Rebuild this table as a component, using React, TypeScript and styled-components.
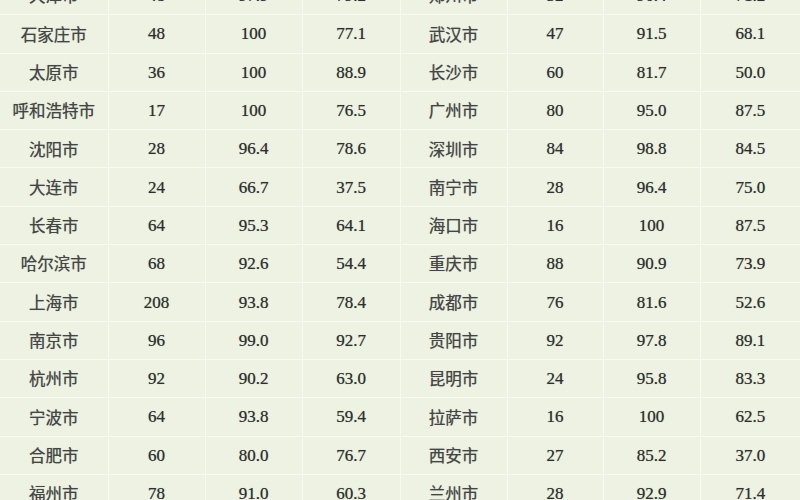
import React from 'react';
import styled, { createGlobalStyle } from 'styled-components';

const GlobalStyle = createGlobalStyle`
  html, body {
    margin: 0;
    padding: 0;
    background: #edf2e3;
  }
`;

type Row = [string, string, string, string];

const leftRows: Row[] = [
  ['天津市', '48', '97.9', '79.2'],
  ['石家庄市', '48', '100', '77.1'],
  ['太原市', '36', '100', '88.9'],
  ['呼和浩特市', '17', '100', '76.5'],
  ['沈阳市', '28', '96.4', '78.6'],
  ['大连市', '24', '66.7', '37.5'],
  ['长春市', '64', '95.3', '64.1'],
  ['哈尔滨市', '68', '92.6', '54.4'],
  ['上海市', '208', '93.8', '78.4'],
  ['南京市', '96', '99.0', '92.7'],
  ['杭州市', '92', '90.2', '63.0'],
  ['宁波市', '64', '93.8', '59.4'],
  ['合肥市', '60', '80.0', '76.7'],
  ['福州市', '78', '91.0', '60.3'],
];

const rightRows: Row[] = [
  ['郑州市', '52', '90.4', '71.2'],
  ['武汉市', '47', '91.5', '68.1'],
  ['长沙市', '60', '81.7', '50.0'],
  ['广州市', '80', '95.0', '87.5'],
  ['深圳市', '84', '98.8', '84.5'],
  ['南宁市', '28', '96.4', '75.0'],
  ['海口市', '16', '100', '87.5'],
  ['重庆市', '88', '90.9', '73.9'],
  ['成都市', '76', '81.6', '52.6'],
  ['贵阳市', '92', '97.8', '89.1'],
  ['昆明市', '24', '95.8', '83.3'],
  ['拉萨市', '16', '100', '62.5'],
  ['西安市', '27', '85.2', '37.0'],
  ['兰州市', '28', '92.9', '71.4'],
];

const widths = [108, 97, 97, 98, 107, 96, 97, 100];

const Page = styled.div`
  width: 800px;
  height: 500px;
  overflow: hidden;
  background: #edf2e3;
`;

const Table = styled.table`
  width: 800px;
  margin-top: -24px;
  border-collapse: collapse;
  table-layout: fixed;
`;

const Cell = styled.td<{ $city?: boolean }>`
  height: 37.3px;
  padding: 0;
  border: 1.5px solid #f8faf2;
  text-align: center;
  vertical-align: middle;
  font-family: ${(p) =>
    p.$city
      ? '"Noto Sans CJK SC", sans-serif'
      : '"Liberation Serif", "Times New Roman", serif'};
  font-size: ${(p) => (p.$city ? '16.5px' : '17px')};
  color: ${(p) => (p.$city ? '#454545' : '#2f2f2f')};
  line-height: 1;
  white-space: nowrap;
  text-shadow: 0 0 0.7px rgba(50, 50, 50, 0.6);
  &:first-child {
    border-left: none;
  }
  &:last-child {
    border-right: none;
  }
`;

export default function App() {
  return (
    <Page>
      <GlobalStyle />
      <Table>
        <colgroup>
          {widths.map((w, i) => (
            <col key={i} style={{ width: w }} />
          ))}
        </colgroup>
        <tbody>
          {leftRows.map((l, i) => {
            const r = rightRows[i];
            return (
              <tr key={i}>
                {[...l, ...r].map((v, j) => (
                  <Cell key={j} $city={j === 0 || j === 4}>
                    {v}
                  </Cell>
                ))}
              </tr>
            );
          })}
        </tbody>
      </Table>
    </Page>
  );
}
